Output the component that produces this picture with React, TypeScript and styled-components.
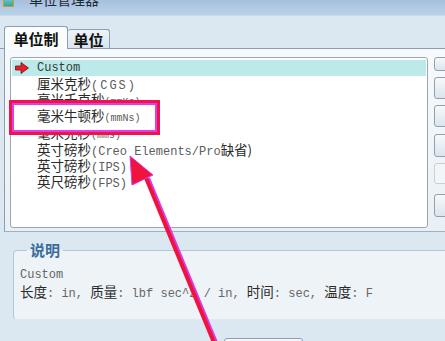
import React from "react";
import styled, { createGlobalStyle } from "styled-components";

const GlobalStyle = createGlobalStyle`
  html, body { margin: 0; padding: 0; }
  body {
    background: #dce8f1;
    font-family: "Noto Sans CJK SC", "Noto Sans", sans-serif;
    overflow: hidden;
  }
  * { box-sizing: border-box; }
`;

const Window = styled.div`
  position: relative;
  width: 445px;
  height: 341px;
  overflow: hidden;
  background: #dce8f1;
`;

const TitleBar = styled.div`
  height: 16px;
  display: flex;
  align-items: flex-start;
  gap: 15px;
  padding-left: 3px;
  background: linear-gradient(#a6c0dd, #bad1e9);
  border-bottom: 1px solid #c8d9e9;
  overflow: hidden;
`;

const AppIcon = styled.div`
  width: 11px;
  height: 13px;
  margin-top: -6px;
  border: 1px solid #c49c32;
  border-radius: 1px;
  background: linear-gradient(#86dcd4, #3aa39c);
`;

const TitleText = styled.div`
  font-size: 14px;
  line-height: 14px;
  margin-top: -8px;
  color: #1d2a38;
`;

const TabStrip = styled.div`
  display: flex;
  align-items: flex-end;
  height: 33px;
  padding: 10px 0 0 4px;
  border-bottom: 1px solid #8d9eae;
`;

const Tab = styled.div<{ $active?: boolean; $w: number }>`
  position: relative;
  width: ${(p) => p.$w}px;
  height: ${(p) => (p.$active ? 23 : 19)}px;
  margin-bottom: ${(p) => (p.$active ? -1 : 0)}px;
  z-index: ${(p) => (p.$active ? 1 : 0)};
  display: flex;
  align-items: center;
  justify-content: center;
  border: 1px solid #8d9eae;
  border-bottom: none;
  border-left: ${(p) => (p.$active ? "1px solid #8d9eae" : "none")};
  border-radius: 3px 3px 0 0;
  background: ${(p) =>
    p.$active ? "#fafcfd" : "linear-gradient(#eef4f9, #d9e5ee)"};
  font-size: 15px;
  font-weight: 700;
  color: #111;
`;

const Panel = styled.div`
  display: flex;
  margin-left: 4px;
  padding: 8px 0 3px 5px;
  border-left: 1px solid #8d9eae;
  border-bottom: 1px solid #9fb0bf;
  background: linear-gradient(#f7fafc, #e9f0f5);
`;

const ListBox = styled.div`
  width: 418px;
  height: 171px;
  flex: none;
  padding: 1.5px 1px;
  border: 1px solid #9ba8b4;
  border-radius: 3px;
  background: #fff;
  display: flex;
  flex-direction: column;
`;

const Row = styled.div<{ $selected?: boolean; $raised?: boolean }>`
  position: relative;
  z-index: ${(p) => (p.$raised ? 3 : "auto")};
  height: 16.4px;
  flex: none;
  display: flex;
  align-items: center;
  padding-left: 3px;
  background: ${(p) => (p.$selected ? "#bce9ea" : "transparent")};
  white-space: nowrap;
`;

const IconSlot = styled.div`
  width: 22px;
  flex: none;
  display: flex;
  align-items: center;
`;

const Label = styled.span`
  line-height: 16px;
  white-space: nowrap;
`;

const Name = styled.span`
  font-family: "Noto Sans CJK SC", sans-serif;
  font-size: 13.5px;
  color: #2a2a2a;
`;

const Abbr = styled.span<{ $size?: number; $spacing?: number }>`
  font-family: "Liberation Mono", monospace;
  font-size: ${(p) => p.$size ?? 12}px;
  letter-spacing: ${(p) => p.$spacing ?? 0}px;
  color: #5c5c5c;
`;

const Custom = styled.span`
  font-family: "Liberation Mono", monospace;
  font-size: 12px;
  color: #2d3d37;
`;

const ButtonColumn = styled.div`
  display: flex;
  flex-direction: column;
  margin-left: 6px;
`;

const SideButton = styled.div<{ $h: number; $top: number; $disabled?: boolean }>`
  width: 18px;
  height: ${(p) => p.$h}px;
  margin-top: ${(p) => p.$top}px;
  border: 1px solid ${(p) => (p.$disabled ? "#c5d0d9" : "#8fa0b0")};
  border-radius: 3px;
  background: ${(p) =>
    p.$disabled ? "#f2f6f9" : "linear-gradient(#f6f9fb, #dbe5ed)"};
`;

const Group = styled.fieldset`
  margin: 8px 0 0 13px;
  padding: 2px 0 19px 6px;
  min-width: 0;
  border: 1px solid #b5c6d4;
  border-right: none;
  border-bottom-color: #dfe8ef;
  border-radius: 4px 0 0 4px;
  background: #eef3f7;
`;

const Legend = styled.legend`
  margin-left: 7px;
  padding: 0 3px;
  font-size: 15px;
  line-height: 20px;
  font-weight: 700;
  color: #3a6c9b;
`;

const DescLine = styled.div`
  height: 19px;
  line-height: 19px;
  white-space: nowrap;
`;

const DescCJK = styled.span`
  font-family: "Noto Sans CJK SC", sans-serif;
  font-size: 13.5px;
  color: #2a2a2a;
`;

const DescMono = styled.span`
  font-family: "Liberation Mono", monospace;
  font-size: 12px;
  color: #666;
`;

const FooterButton = styled.div`
  margin: 18px 0 0 224px;
  width: 79px;
  height: 20px;
  border: 1px solid #8b9fb2;
  border-radius: 3px;
  background: linear-gradient(#f5f8fb, #dbe5ee);
`;

const HighlightBox = styled.div`
  position: absolute;
  left: 9px;
  top: 100px;
  width: 151px;
  height: 35px;
  z-index: 2;
  border: 3px solid #f0124a;
  box-shadow: inset 0 0 0 2px #dd3ee6;
  background: #fff;
`;

const ArrowLayer = styled.svg`
  position: absolute;
  left: 0;
  top: 0;
  z-index: 4;
  pointer-events: none;
`;

const RedArrowIcon = () => (
  <svg width="14" height="12" viewBox="0 0 14 12">
    <polygon
      points="0.5,4 6,4 6,0.5 13.5,6 6,11.5 6,8 0.5,8"
      fill="#e2202b"
      stroke="#7a1015"
      strokeWidth="0.8"
    />
  </svg>
);

type Unit = { name: string; abbr: React.ReactNode };

const units: Unit[] = [
  { name: "厘米克秒", abbr: <Abbr $spacing={2}>(CGS)</Abbr> },
  { name: "毫米千克秒", abbr: <Abbr $size={10}>(mmKs)</Abbr> },
  { name: "毫米牛顿秒", abbr: <Abbr $size={10}>(mmNs)</Abbr> },
  { name: "毫米克秒", abbr: <Abbr $size={10}>(mms)</Abbr> },
  {
    name: "英寸磅秒",
    abbr: (
      <>
        <Abbr>(Creo Elements/Pro</Abbr>
        <Name>缺省)</Name>
      </>
    ),
  },
  { name: "英寸磅秒", abbr: <Abbr>(IPS)</Abbr> },
  { name: "英尺磅秒", abbr: <Abbr>(FPS)</Abbr> },
];

const buttons = [
  { h: 14, top: 0 },
  { h: 22, top: 6 },
  { h: 22, top: 6 },
  { h: 23, top: 7 },
  { h: 21, top: 6, disabled: true },
  { h: 23, top: 10 },
];

export default function App() {
  return (
    <Window>
      <GlobalStyle />
      <TitleBar>
        <AppIcon />
        <TitleText>单位管理器</TitleText>
      </TitleBar>
      <TabStrip>
        <Tab $active $w={64}>单位制</Tab>
        <Tab $w={42}>单位</Tab>
      </TabStrip>
      <Panel>
        <ListBox>
          <Row $selected>
            <IconSlot>
              <RedArrowIcon />
            </IconSlot>
            <Custom>Custom</Custom>
          </Row>
          {units.map((u, i) => (
            <Row key={i} $raised={i === 2}>
              <IconSlot />
              <Label>
                <Name>{u.name}</Name>
                {u.abbr}
              </Label>
            </Row>
          ))}
        </ListBox>
        <ButtonColumn>
          {buttons.map((b, i) => (
            <SideButton key={i} $h={b.h} $top={b.top} $disabled={b.disabled} />
          ))}
        </ButtonColumn>
      </Panel>
      <Group>
        <Legend>说明</Legend>
        <DescLine>
          <DescMono>Custom</DescMono>
        </DescLine>
        <DescLine>
          <DescCJK>长度</DescCJK>
          <DescMono>: in, </DescMono>
          <DescCJK>质量</DescCJK>
          <DescMono>: lbf sec^2 / in, </DescMono>
          <DescCJK>时间</DescCJK>
          <DescMono>: sec, </DescMono>
          <DescCJK>温度</DescCJK>
          <DescMono>: F</DescMono>
        </DescLine>
      </Group>
      <FooterButton />
      <HighlightBox />
      <ArrowLayer width="445" height="341" viewBox="0 0 445 341">
        <line x1="148" y1="178" x2="217" y2="345" stroke="#d63ce0" strokeWidth="4" />
        <line x1="146" y1="178" x2="215" y2="345" stroke="#f0133e" strokeWidth="4" />
        <polygon
          points="130,156 153,175 132,185"
          fill="#f0133e"
          stroke="#d63ce0"
          strokeWidth="1"
          strokeLinejoin="round"
        />
      </ArrowLayer>
    </Window>
  );
}
